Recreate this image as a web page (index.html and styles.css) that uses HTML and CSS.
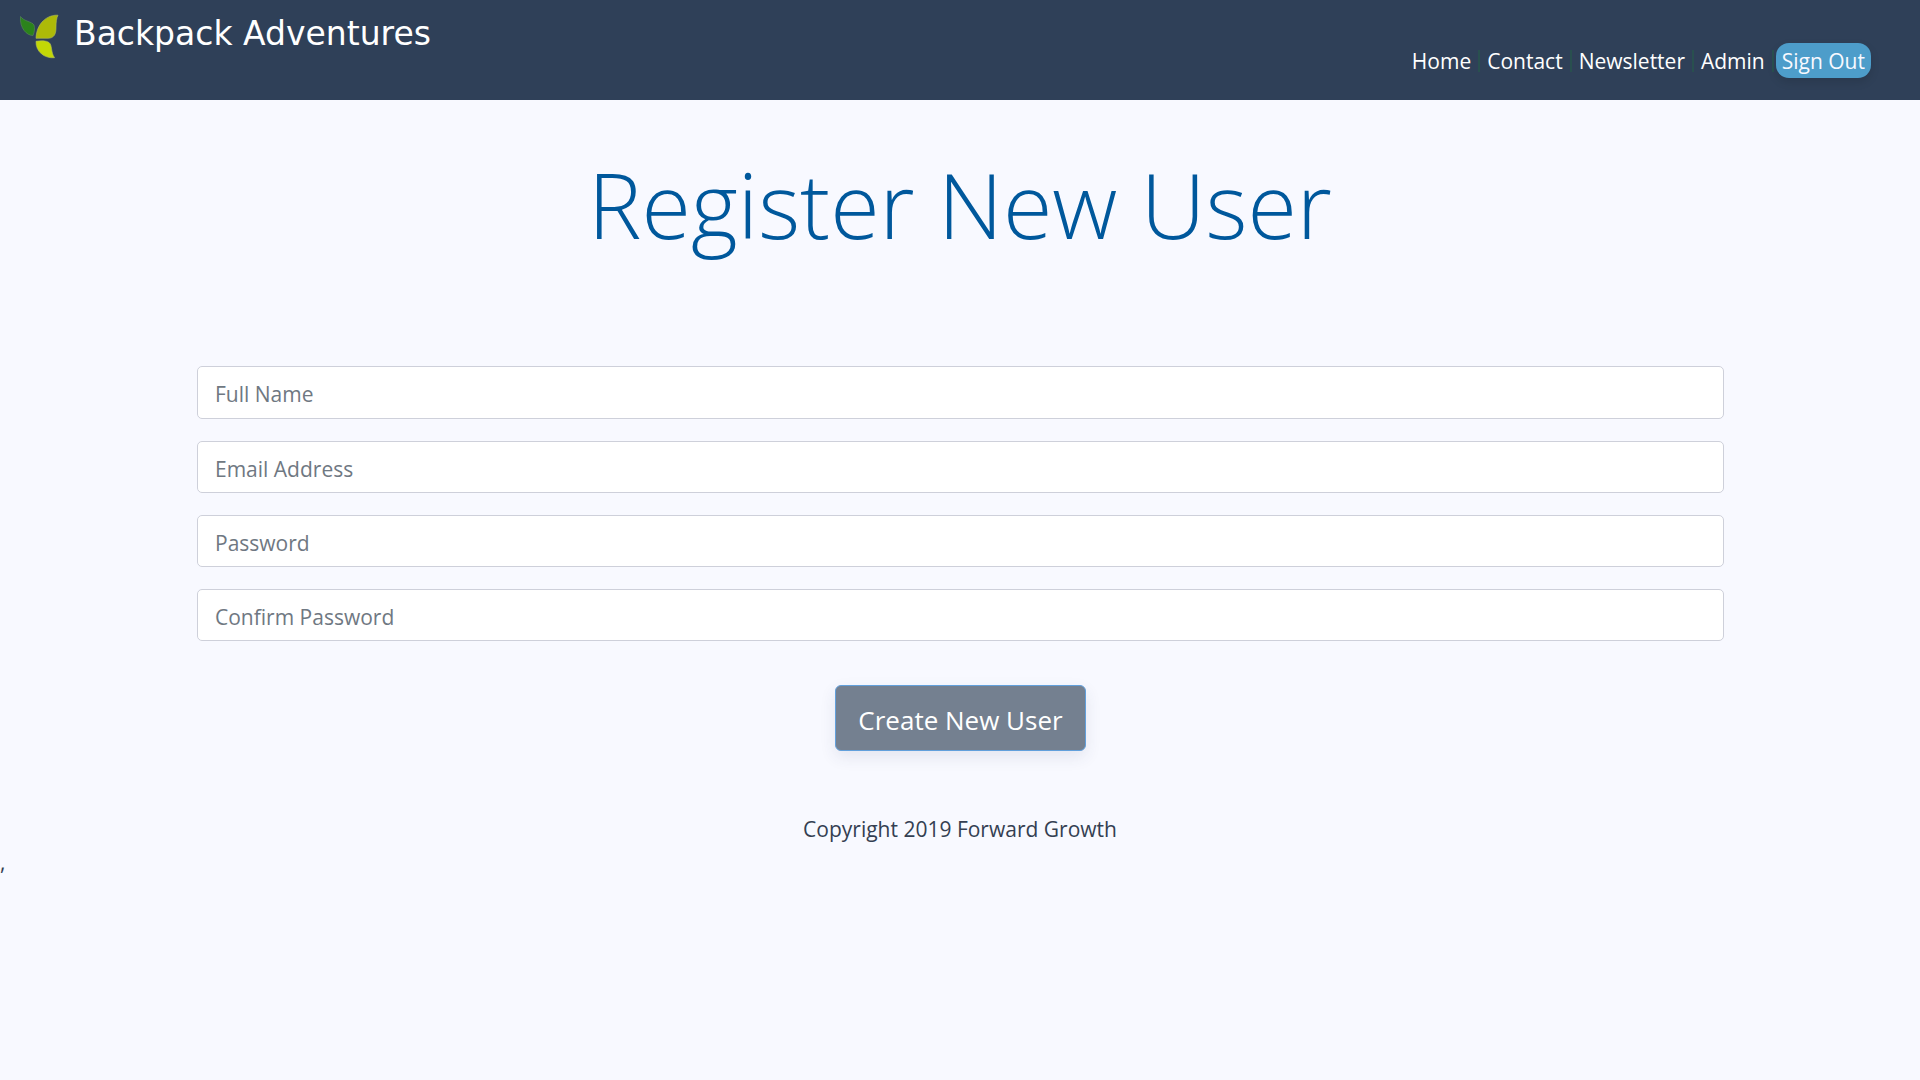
FILE: index.html
```html
<!DOCTYPE html>
<html lang="en">
<head>
<meta charset="utf-8">
<meta name="viewport" content="width=device-width, initial-scale=1">
<title>Backpack Adventures</title>
<link rel="stylesheet" href="styles.css">
</head>
<body>
<header class="site-header">
  <a class="brand" href="#">
    <svg class="brand-logo" viewBox="0 0 40 46" aria-hidden="true">
      <path fill="#2b831b" stroke="#5a8a5c" stroke-width=".6" d="M1.500 2.500C5 7.500 13 7.500 15 11C16 14 15.500 18 14 21.500C7.500 21.500 0.500 14 1.500 2.500Z"/>
      <path fill="#adba08" stroke="#aebc5c" stroke-width=".6" d="M39 1.200C28.500 .5 17.500 9 17 24.300H29C35 24.300 37 20 37 14C37 8 37.500 4 39 1.200Z"/>
      <path fill="#c3d806" stroke="#b7c65c" stroke-width=".6" d="M17 27.300C21.500 26.500 27.500 26.500 30 28.500C33.500 31 31.500 38 35.500 43.700C26 44.700 16.500 38 17 27.300Z"/>
    </svg>
    <span class="brand-name">Backpack Adventures</span>
  </a>
  <nav class="site-nav">
    <ul class="nav-list">
      <li class="nav-item"><a href="#">Home</a></li>
      <li class="nav-item"><a href="#">Contact</a></li>
      <li class="nav-item"><a href="#">Newsletter</a></li>
      <li class="nav-item"><a href="#">Admin</a></li>
    </ul>
    <button class="sign-out" type="button">Sign Out</button>
  </nav>
</header>
<main class="content">
  <h1 class="page-title">Register New User</h1>
  <form class="register-form">
    <input class="field" type="text" placeholder="Full Name" aria-label="Full Name">
    <input class="field" type="email" placeholder="Email Address" aria-label="Email Address">
    <input class="field" type="password" placeholder="Password" aria-label="Password">
    <input class="field" type="password" placeholder="Confirm Password" aria-label="Confirm Password">
    <button class="submit" type="submit">Create New User</button>
  </form>
</main>
<footer class="site-footer">Copyright 2019 Forward Growth</footer>
<div class="trailing">,</div>
</body>
</html>
```
FILE: styles.css
```css
* {
  box-sizing: border-box;
}

body {
  margin: 0;
  background: #f8f9ff;
  color: #343f52;
  font-family: "Segoe UI", "Open Sans", sans-serif;
  font-size: 21px;
  line-height: 32px;
}

.site-header {
  display: flex;
  justify-content: space-between;
  align-items: flex-start;
  min-height: 100px;
  padding: 14px 49px 0 19px;
  background: #2f4058;
}

.brand {
  display: flex;
  gap: 15px;
  color: #fff;
  text-decoration: none;
}

.brand-logo {
  width: 40px;
  height: 46px;
}

.brand-name {
  font-family: Verdana, "DejaVu Sans", sans-serif;
  font-size: 33px;
  line-height: 40px;
}

.site-nav {
  display: flex;
  align-items: center;
  gap: 2px;
  padding-top: 29px;
}

.nav-list {
  display: flex;
  margin: 0;
  padding: 0;
  list-style: none;
}

.nav-item {
  padding: 0 7px;
  border-right: 2px solid #29504f;
  line-height: 22px;
}

.nav-item a {
  color: #fff;
  text-decoration: none;
}

.sign-out {
  height: 35px;
  padding: 0 6px;
  border: 0;
  border-radius: 13px;
  background: #4d9dca;
  box-shadow: 0 4px 10px rgba(0, 0, 0, 0.12);
  color: #f8f9ff;
  font: inherit;
}

.content {
  padding: 0 10%;
}

.page-title {
  margin: 0;
  padding-top: 44px;
  color: #00589c;
  font-size: 90px;
  font-weight: 300;
  line-height: 120px;
  text-align: center;
}

.register-form {
  display: flex;
  flex-direction: column;
  gap: 22px;
  margin: 102px 4px 0 5px;
}

.field {
  width: 100%;
  height: 52px;
  padding: 3px 17px 0;
  border: 1px solid #ced0da;
  border-radius: 5px;
  background: #fff;
  color: #343f52;
  font: inherit;
}

.field:first-child {
  height: 53px;
}

.field::placeholder {
  color: #6f7882;
  opacity: 1;
}

.submit {
  align-self: center;
  height: 66px;
  margin-top: 22px;
  padding: 4px 22px 0;
  border: 1px solid #62a0dc;
  border-radius: 6px;
  background: #748090;
  box-shadow: 0 6px 16px rgba(50, 60, 100, 0.1);
  color: #fff;
  font: inherit;
  font-size: 26px;
}

.site-footer {
  padding-top: 62px;
  text-align: center;
}

.trailing {
  padding-top: 1px;
}
```
